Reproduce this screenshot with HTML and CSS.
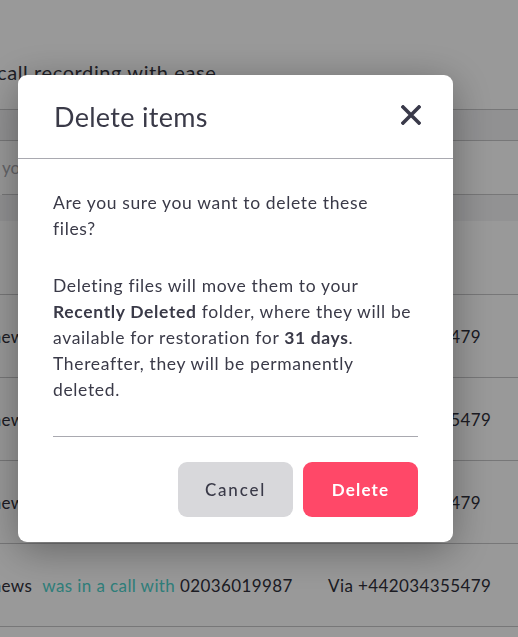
FILE: index.html
```html
<!doctype html>
<html lang="en">
  <head>
    <title>Call recordings</title>
    <link rel="stylesheet" href="styles.css">
  </head>
  <body>

    <div class="page">
      <p class="tagline">call recording with ease</p>
      <div class="tabs"></div>
      <div class="search">your recordings</div>
      <div class="table-head"></div>
      <div class="table-cols"></div>

      <div class="row">
        <div class="call"><span class="name">Matthews</span><span class="verb">was in a call with</span> 02036019987</div>
        <div class="via">Via +44203435479</div>
      </div>
      <div class="row">
        <div class="call"><span class="name">Matthews</span><span class="verb">was in a call with</span> 02036019987</div>
        <div class="via">Via +442034355479</div>
      </div>
      <div class="row">
        <div class="call"><span class="name">Matthews</span><span class="verb">was in a call with</span> 02036019987</div>
        <div class="via">Via +44203435479</div>
      </div>
      <div class="row">
        <div class="call"><span class="name">Matthews</span><span class="verb">was in a call with</span> 02036019987</div>
        <div class="via">Via +442034355479</div>
      </div>
    </div>

    <div class="overlay">
      <div class="modal">
        <div class="modal-head">
          <h2>Delete items</h2>
          <button class="close" aria-label="Close">
            <svg width="20" height="20" viewBox="0 0 20 20">
              <path d="M2 2 L18 18 M18 2 L2 18" stroke="#3a3a4a" stroke-width="3.6" stroke-linecap="square"/>
            </svg>
          </button>
        </div>
        <div class="modal-body">
          <p>Are you sure you want to delete these files?</p>
          <p>Deleting files will move them to your <b>Recently Deleted</b> folder, where they will be available for restoration for <b>31 days</b>. Thereafter, they will be permanently deleted.</p>
          <div class="actions">
            <button class="btn cancel">Cancel</button>
            <button class="btn delete">Delete</button>
          </div>
        </div>
      </div>
    </div>

  </body>
</html>
```

FILE: styles.css
```css
body {
  margin: 0;
  background-color: #ffffff;
  font-family: Lato, "Open Sans", sans-serif;
  color: #2f2f3a;
  overflow: hidden;
}

.page {
  height: 637px;
}

.tagline {
  margin: 0 0 0 -3px;
  padding-top: 61px;
  height: 109px;
  box-sizing: border-box;
  font-size: 20px;
  line-height: 22px;
  letter-spacing: 0.6px;
  color: #363640;
}

.tabs {
  height: 32px;
  background-color: #f2f2f4;
  border-top: 1px solid #c6c6c8;
  border-bottom: 1px solid #c6c6c8;
  box-sizing: border-box;
}

.search {
  height: 54px;
  line-height: 54px;
  margin-left: 2px;
  font-size: 17px;
  color: #a8a8ae;
  border-bottom: 1px solid #c6c6c8;
  box-sizing: border-box;
}

.table-head {
  height: 26px;
  background-color: #f3f3f5;
}

.table-cols {
  height: 74px;
  border-bottom: 1px solid #c6c6c8;
  box-sizing: border-box;
}

.row {
  display: grid;
  grid-template-columns: 374px auto;
  align-items: center;
  height: 83px;
  margin-left: -46px;
  border-bottom: 1px solid #c6c6c8;
  box-sizing: border-box;
  font-size: 17px;
  letter-spacing: 0.4px;
}

.name {
  margin-right: 10px;
}

.verb {
  color: #4dd2cb;
}

.overlay {
  position: fixed;
  top: 0;
  left: 0;
  right: 0;
  bottom: 0;
  background-color: rgba(0, 0, 0, 0.4);
  padding: 75px 0 0 18px;
}

.modal {
  width: 435px;
  background-color: #ffffff;
  border-radius: 9px;
  box-shadow: 0 8px 40px rgba(0, 0, 0, 0.35);
  color: #3a3a48;
}

.modal-head {
  display: flex;
  justify-content: space-between;
  align-items: center;
  height: 83px;
  padding: 0 32px 0 35px;
  border-bottom: 1px solid #a9a9b0;
}

.modal-head h2 {
  margin: 0 0 0 1px;
  font-size: 27px;
  font-weight: 400;
  letter-spacing: 0.3px;
}

.close {
  border: none;
  background: none;
  padding: 0;
  width: 20px;
  height: 20px;
  margin-top: -4px;
}

.modal-body {
  padding: 31px 35px 25px 35px;
}

.modal-body p {
  margin: 0 0 31px 0;
  padding-right: 5px;
  font-size: 17.5px;
  line-height: 26px;
  letter-spacing: 0.65px;
}

.modal-body p:last-of-type {
  margin-bottom: 33px;
}

.actions {
  display: flex;
  justify-content: flex-end;
  gap: 10px;
  padding-top: 25px;
  border-top: 1px solid #a9a9b0;
}

.btn {
  width: 115px;
  height: 55px;
  border: none;
  border-radius: 9px;
  font-family: Lato, "Open Sans", sans-serif;
  font-size: 17px;
}

.cancel {
  background-color: #d8d8db;
  color: #3a3a48;
  letter-spacing: 1.8px;
  font-weight: 500;
}

.delete {
  background-color: #ff4868;
  color: #ffffff;
  font-weight: 700;
  letter-spacing: 1.2px;
}
```
